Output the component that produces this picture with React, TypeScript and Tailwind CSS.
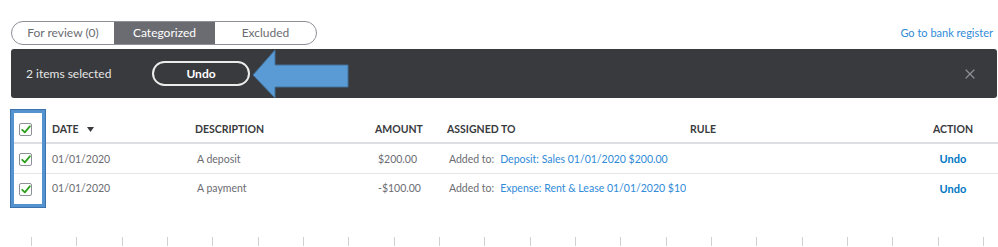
import { X } from 'lucide-react';

const rows = [
  { date: '01/01/2020', desc: 'A deposit', amount: '$200.00', link: 'Deposit: Sales 01/01/2020 $200.00' },
  { date: '01/01/2020', desc: 'A payment', amount: '-$100.00', link: 'Expense: Rent & Lease 01/01/2020 $100.00' },
];

const cols = 'grid grid-cols-[32px_143px_180px_72px_247px_1fr_70px] pr-[10px]';

function CheckBox() {
  return (
    <div className="w-[13px] h-[13px] border border-[#8d9096] rounded-[2px] bg-white flex items-center justify-center">
      <svg width="10" height="9" viewBox="0 0 10 9" fill="none">
        <path d="M1.2 4.8 L3.8 7.3 L8.8 1.3" stroke="#2ca01c" strokeWidth="1.8" strokeLinecap="round" strokeLinejoin="round" />
      </svg>
    </div>
  );
}

export default function App() {
  return (
    <div className="relative w-[998px] h-[247px] overflow-hidden bg-white font-['Lato','Liberation_Sans',sans-serif] text-[#393a3d]">
      {/* tabs + register link */}
      <div className="flex items-center justify-between pt-[21px] pl-[11px] pr-[5px]">
        <div className="flex h-[24px] rounded-full border border-[#8d9096] overflow-hidden text-[12px]">
          <div className="w-[102px] flex items-center justify-center text-[#6b6c72]">For review (0)</div>
          <div className="w-[101px] flex items-center justify-center bg-[#6b6c72] text-white">Categorized</div>
          <div className="w-[101px] flex items-center justify-center text-[#6b6c72]">Excluded</div>
        </div>
        <a className="text-[11px] text-[#2f8ad8]">Go to bank register</a>
      </div>

      {/* selection bar */}
      <div className="mt-[4px] ml-[11px] mr-[1px] h-[49px] rounded-[3px] bg-[#393a3d] flex items-center pl-[15px] pr-[19px]">
        <span className="w-[126px] text-[12px] text-[#e6e6e6]">2 items selected</span>
        <button className="w-[98px] h-[25px] rounded-full border-2 border-[#ececec] text-white text-[12px] font-bold">Undo</button>
        <div className="flex-1" />
        <X size={16} strokeWidth={1.8} className="text-[#8d9096]" />
      </div>

      {/* annotation arrow */}
      <svg className="absolute left-[252px] top-[49px]" width="98" height="50" viewBox="0 0 98 50">
        <polygon points="1,26 23,1 23,16 96,16 96,38 23,38 23,49" fill="#5b9bd5" stroke="#41719c" strokeWidth="1" />
      </svg>

      {/* table */}
      <div className="mt-[12px] ml-[12px]">
        <div className={`${cols} h-[34px] pt-[7px] items-center border-b-2 border-[#dcdee2] text-[10.5px] font-bold`}>
          <div className="pl-[7px]"><CheckBox /></div>
          <div className="pl-[8px] flex items-center gap-[8px]">
            DATE
            <svg width="7" height="5" viewBox="0 0 7 5"><polygon points="0,0 7,0 3.5,5" fill="#393a3d" /></svg>
          </div>
          <div className="pl-[8px]">DESCRIPTION</div>
          <div className="pl-[8px]">AMOUNT</div>
          <div className="pl-[8px]">ASSIGNED TO</div>
          <div className="pl-[4px]">RULE</div>
          <div className="text-center">ACTION</div>
        </div>
        {rows.map((r, i) => (
          <div
            key={i}
            className={`${cols} h-[30px] items-center text-[10.5px] text-[#6b6c72] ${i === 0 ? 'border-b border-[#e3e5e8] pt-[2px]' : ''}`}
          >
            <div className="pl-[7px]"><CheckBox /></div>
            <div className="pl-[8px]">{r.date}</div>
            <div className="pl-[10px]">{r.desc}</div>
            <div className="pl-[11px]">{r.amount}</div>
            <div className="pl-[10px] whitespace-nowrap overflow-hidden">
              Added to:<span className="ml-[6px] text-[#2f8ad8]">{r.link}</span>
            </div>
            <div />
            <div className="text-center font-bold text-[11px] text-[#0077c5]">Undo</div>
          </div>
        ))}
      </div>

      {/* annotation box around checkbox column */}
      <div className="absolute left-[11px] top-[110px] w-[34px] h-[97px] border-[3px] border-[#5592d0] outline outline-1 outline-[#3c72ae]" />

      {/* bottom ruler ticks */}
      <div className="flex mt-[33px] pl-[31px]">
        {Array.from({ length: 22 }).map((_, i) => (
          <div key={i} className="w-[45.33px] h-[9px] shrink-0 border-l border-[#d0d0d0]" />
        ))}
      </div>
    </div>
  );
}
